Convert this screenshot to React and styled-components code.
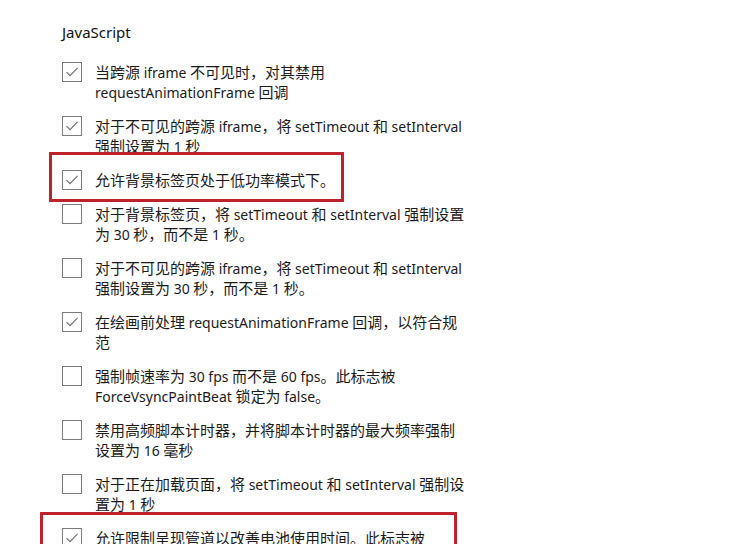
import React from 'react';
import styled, { createGlobalStyle, css } from 'styled-components';

const GlobalStyle = createGlobalStyle`
  html, body {
    margin: 0;
    padding: 0;
    background: #ffffff;
  }
  body {
    font-family: "Segoe UI", "Noto Sans", "Noto Sans CJK SC", sans-serif;
    color: #1b1b1b;
    overflow: hidden;
  }
`;

const Page = styled.section`
  padding: 22px 0 0 62px;
  width: 440px;
`;

const Heading = styled.h2`
  margin: 0 0 20px;
  font-size: 15px;
  line-height: 20px;
  font-weight: 400;
  color: #111;
`;

const List = styled.div`
  display: flex;
  flex-direction: column;
  gap: 14px;
`;

const Item = styled.label`
  position: relative;
  display: flex;
  align-items: flex-start;
  gap: 13px;

  ${({ $mark }) =>
    $mark &&
    css`
      &::before {
        content: '';
        position: absolute;
        top: ${$mark.top}px;
        left: ${$mark.left}px;
        width: ${$mark.width}px;
        height: ${$mark.height}px;
        border: 3px solid #c0222c;
        box-sizing: border-box;
        pointer-events: none;
      }
    `}
`;

const Box = styled.span`
  flex: none;
  width: 20px;
  height: 20px;
  box-sizing: border-box;
  border: 1px solid #7c7c7c;
  background: #fff;
  display: grid;
  place-items: center;

  svg {
    width: 14px;
    height: 14px;
  }
`;

const Text = styled.div`
  display: flex;
  flex-direction: column;
  font-size: 14px;
  color: #1b1b1b;
`;

const Line = styled.div`
  height: 20px;
  line-height: 20px;
  white-space: nowrap;
`;

// Chinese runs are set a touch wider, like the YaHei glyphs in the original
const Han = styled.span`
  font-family: "Noto Sans CJK SC", sans-serif;
  font-size: 15px;
  line-height: 20px;
`;

const Check = () => (
  <svg viewBox="0 0 14 14" fill="none">
    <path d="M1.5 7.2 L5 10.6 L12.6 2.8" stroke="#6d6d6d" strokeWidth="1.1" />
  </svg>
);

const HAN_RE = /([\u3000-\u9fff\uff00-\uffef]+)/;

const renderLine = (line) =>
  line.split(HAN_RE).map((part, k) =>
    k % 2 === 1 ? <Han key={k}>{part}</Han> : part
  );

const items = [
  { checked: true, lines: ['当跨源 iframe 不可见时，对其禁用', 'requestAnimationFrame 回调'] },
  { checked: true, lines: ['对于不可见的跨源 iframe，将 setTimeout 和 setInterval', '强制设置为 1 秒'] },
  { checked: true, lines: ['允许背景标签页处于低功率模式下。'], mark: { top: -18, left: -13, width: 295, height: 50 } },
  { checked: false, lines: ['对于背景标签页，将 setTimeout 和 setInterval 强制设置', '为 30 秒，而不是 1 秒。'] },
  { checked: false, lines: ['对于不可见的跨源 iframe，将 setTimeout 和 setInterval', '强制设置为 30 秒，而不是 1 秒。'] },
  { checked: true, lines: ['在绘画前处理 requestAnimationFrame 回调，以符合规', '范'] },
  { checked: false, lines: ['强制帧速率为 30 fps 而不是 60 fps。此标志被', 'ForceVsyncPaintBeat 锁定为 false。'] },
  { checked: false, lines: ['禁用高频脚本计时器，并将脚本计时器的最大频率强制', '设置为 16 毫秒'] },
  { checked: false, lines: ['对于正在加载页面，将 setTimeout 和 setInterval 强制设', '置为 1 秒'] },
  { checked: true, lines: ['允许限制呈现管道以改善电池使用时间。此标志被'], mark: { top: -16, left: -22, width: 417, height: 80 } },
];

export default function App() {
  return (
    <>
      <GlobalStyle />
      <Page>
        <Heading>JavaScript</Heading>
        <List>
          {items.map((item, i) => (
            <Item key={i} $mark={item.mark}>
              <Box>{item.checked && <Check />}</Box>
              <Text>
                {item.lines.map((line, j) => (
                  <Line key={j}>{renderLine(line)}</Line>
                ))}
              </Text>
            </Item>
          ))}
        </List>
      </Page>
    </>
  );
}
